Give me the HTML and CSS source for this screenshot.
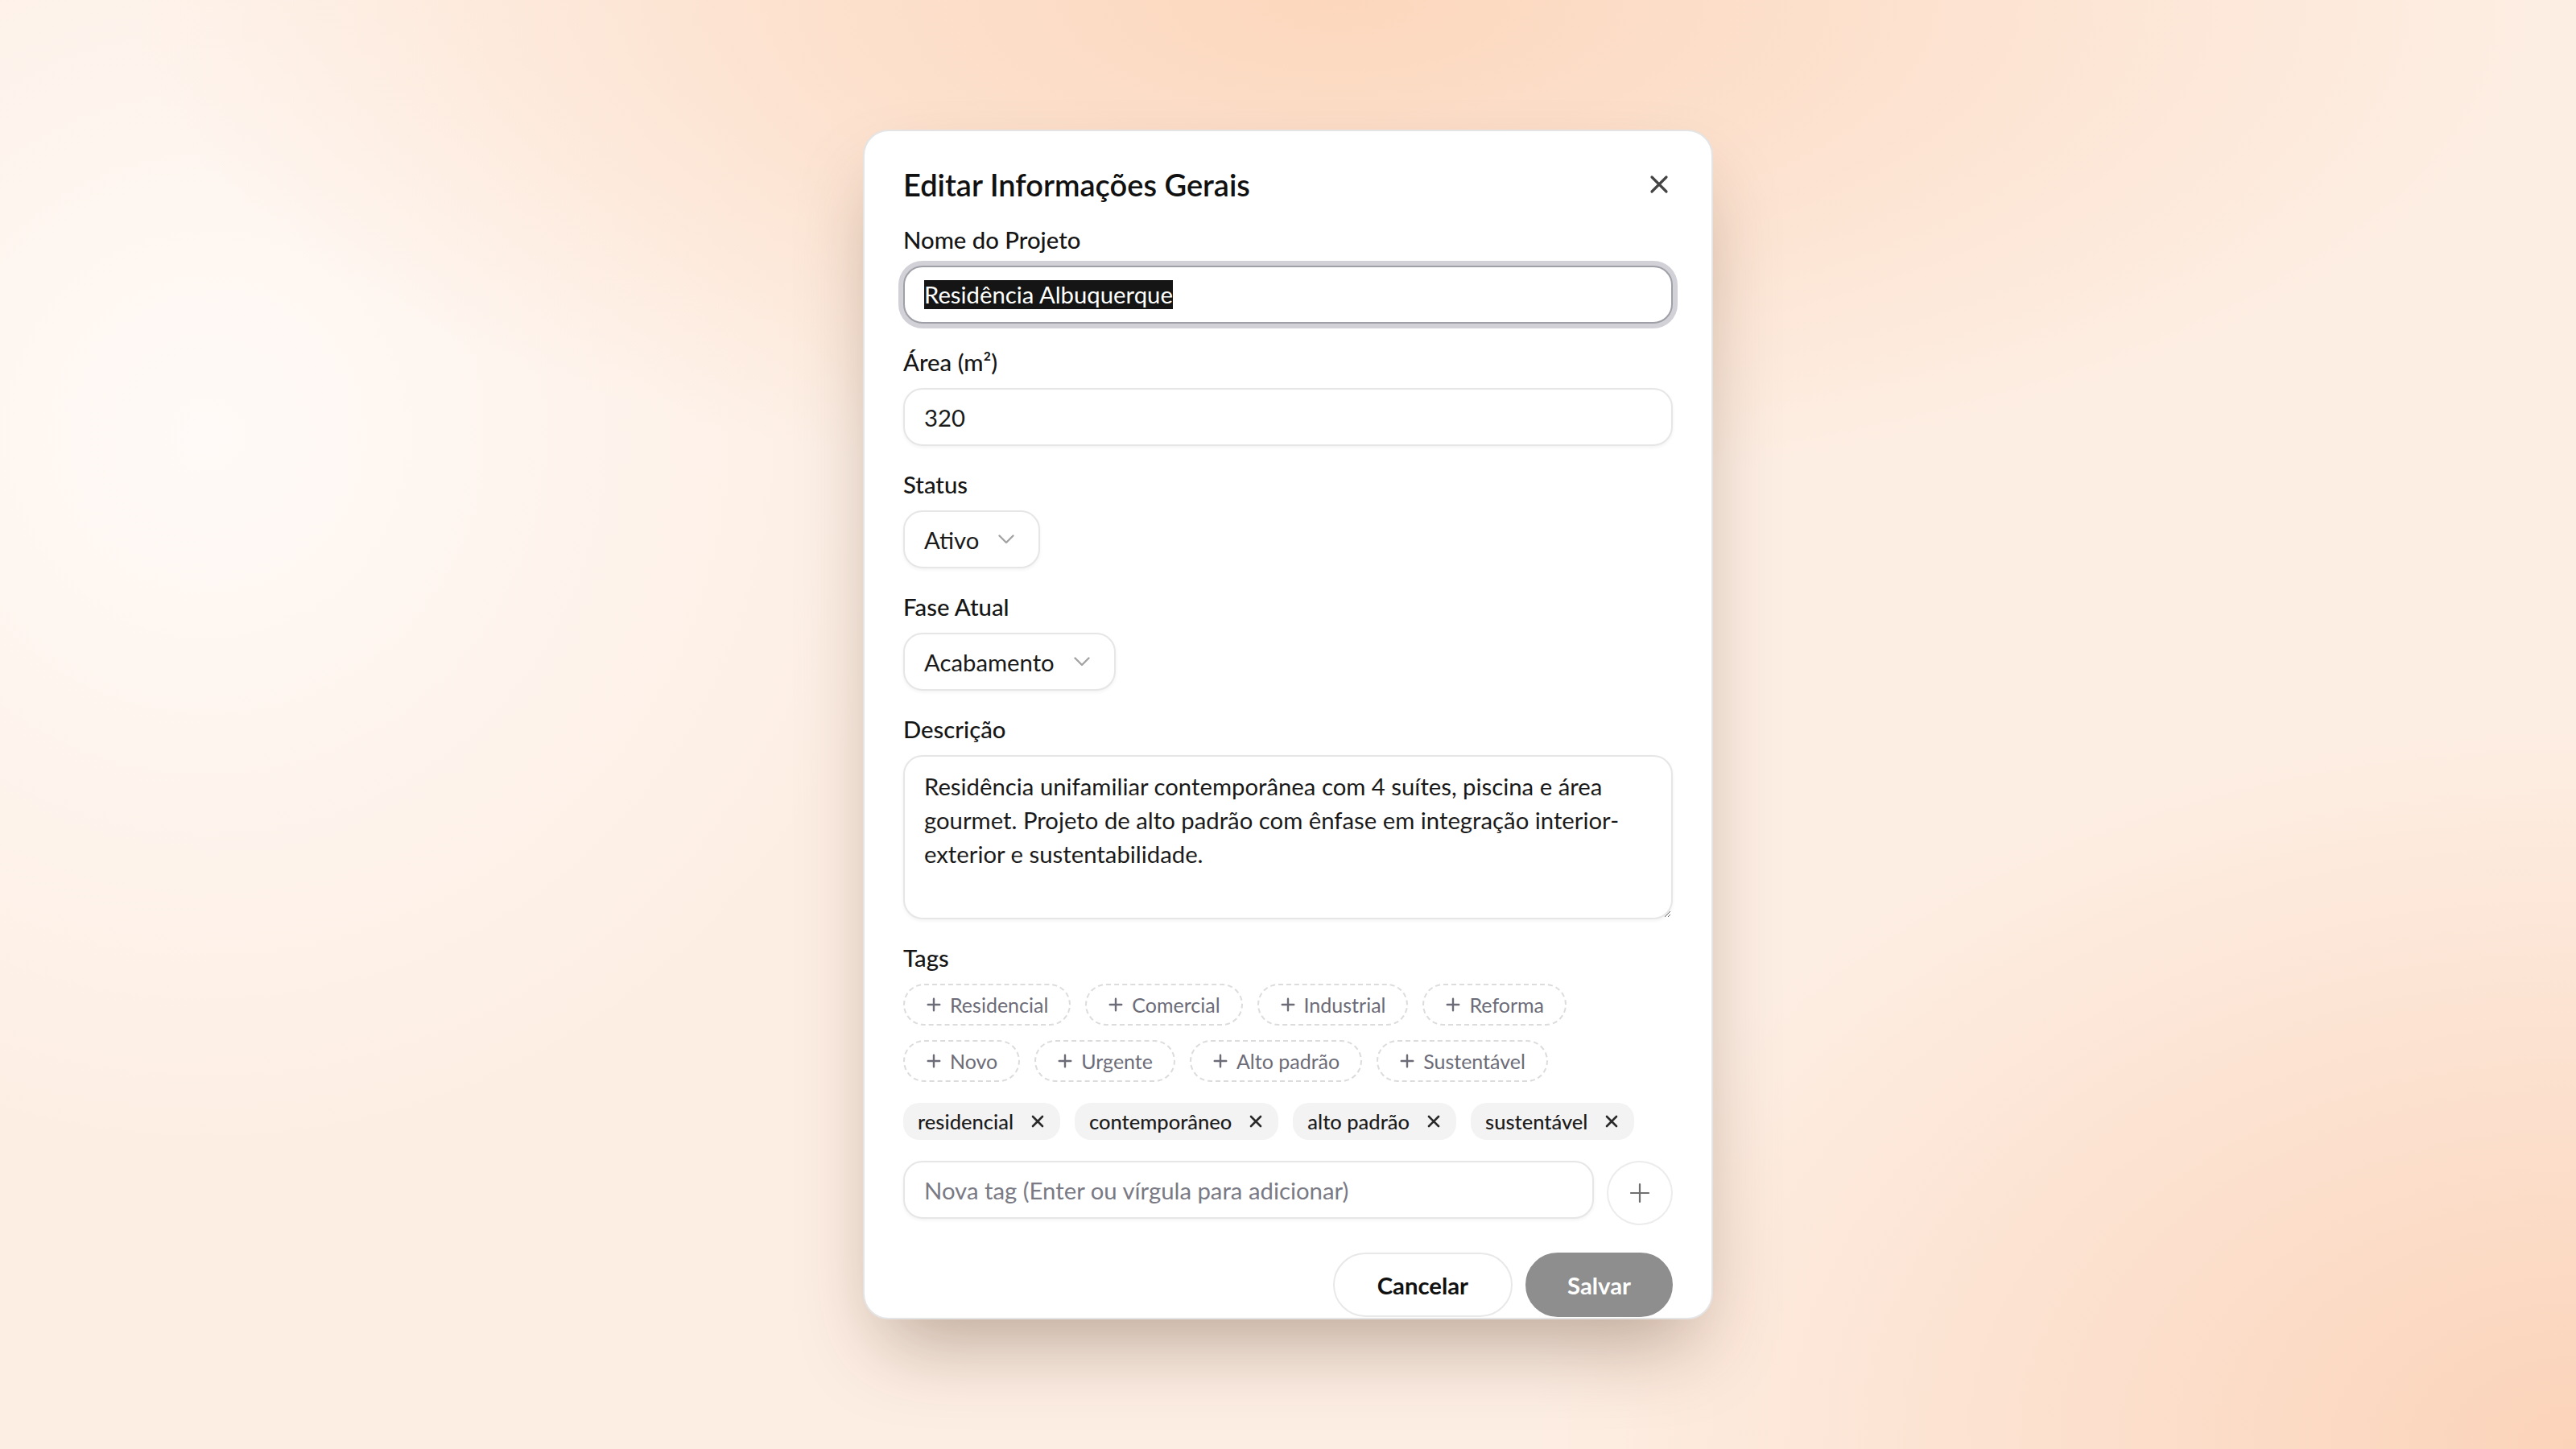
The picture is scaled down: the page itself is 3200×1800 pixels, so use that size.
FILE: index.html
```html
<!DOCTYPE html>
<html lang="pt-BR">
<head>
  <meta charset="UTF-8">
  <meta name="viewport" content="width=device-width, initial-scale=1.0">
  <title>Editar Informações Gerais</title>
  <link rel="stylesheet" href="styles.css">
</head>
<body>
  <div class="backdrop">
    <div class="modal">
      <div class="modal-header">
        <h2 class="modal-title">Editar Informações Gerais</h2>
        <button class="close-btn" aria-label="Fechar">
          <svg width="40" height="40" viewBox="0 0 40 40"><path d="M11 11 29 29M29 11 11 29"/></svg>
        </button>
      </div>

      <div class="form">
        <!-- Nome -->
        <div class="field">
          <label class="field-label">Nome do Projeto</label>
          <div class="text-input focused"><span class="selected-text">Residência Albuquerque</span></div>
        </div>

        <!-- Área -->
        <div class="field">
          <label class="field-label">Área (m²)</label>
          <input class="text-input" type="text" value="320">
        </div>

        <!-- Status -->
        <div class="field">
          <label class="field-label">Status</label>
          <button class="select">Ativo
            <svg width="20" height="12" viewBox="0 0 20 12"><path d="M1.5 1.5 10 10 18.5 1.5"/></svg>
          </button>
        </div>

        <!-- Fase -->
        <div class="field">
          <label class="field-label">Fase Atual</label>
          <button class="select">Acabamento
            <svg width="20" height="12" viewBox="0 0 20 12"><path d="M1.5 1.5 10 10 18.5 1.5"/></svg>
          </button>
        </div>

        <!-- Descrição -->
        <div class="field">
          <label class="field-label">Descrição</label>
          <textarea class="text-input textarea" rows="4">Residência unifamiliar contemporânea com 4 suítes, piscina e área gourmet. Projeto de alto padrão com ênfase em integração interior-exterior e sustentabilidade.</textarea>
        </div>

        <!-- Tags -->
        <div class="field">
          <label class="field-label">Tags</label>
          <div class="tag-suggestions">
            <button class="tag-suggest"><svg width="24" height="24" viewBox="0 0 24 24"><path d="M12 4.75v14.5M4.75 12h14.5"/></svg>Residencial</button>
            <button class="tag-suggest"><svg width="24" height="24" viewBox="0 0 24 24"><path d="M12 4.75v14.5M4.75 12h14.5"/></svg>Comercial</button>
            <button class="tag-suggest"><svg width="24" height="24" viewBox="0 0 24 24"><path d="M12 4.75v14.5M4.75 12h14.5"/></svg>Industrial</button>
            <button class="tag-suggest"><svg width="24" height="24" viewBox="0 0 24 24"><path d="M12 4.75v14.5M4.75 12h14.5"/></svg>Reforma</button>
            <button class="tag-suggest"><svg width="24" height="24" viewBox="0 0 24 24"><path d="M12 4.75v14.5M4.75 12h14.5"/></svg>Novo</button>
            <button class="tag-suggest"><svg width="24" height="24" viewBox="0 0 24 24"><path d="M12 4.75v14.5M4.75 12h14.5"/></svg>Urgente</button>
            <button class="tag-suggest"><svg width="24" height="24" viewBox="0 0 24 24"><path d="M12 4.75v14.5M4.75 12h14.5"/></svg>Alto padrão</button>
            <button class="tag-suggest"><svg width="24" height="24" viewBox="0 0 24 24"><path d="M12 4.75v14.5M4.75 12h14.5"/></svg>Sustentável</button>
          </div>

          <div class="tag-list">
            <span class="tag">residencial<button class="tag-remove"><svg width="20" height="20" viewBox="0 0 20 20"><path d="M4 4 16 16M16 4 4 16"/></svg></button></span>
            <span class="tag">contemporâneo<button class="tag-remove"><svg width="20" height="20" viewBox="0 0 20 20"><path d="M4 4 16 16M16 4 4 16"/></svg></button></span>
            <span class="tag">alto padrão<button class="tag-remove"><svg width="20" height="20" viewBox="0 0 20 20"><path d="M4 4 16 16M16 4 4 16"/></svg></button></span>
            <span class="tag">sustentável<button class="tag-remove"><svg width="20" height="20" viewBox="0 0 20 20"><path d="M4 4 16 16M16 4 4 16"/></svg></button></span>
          </div>

          <div class="tag-add">
            <input class="text-input" type="text" placeholder="Nova tag (Enter ou vírgula para adicionar)">
            <button class="add-btn" aria-label="Adicionar">
              <svg width="32" height="32" viewBox="0 0 32 32"><path d="M16 5v22M5 16h22"/></svg>
            </button>
          </div>
        </div>
      </div>

      <div class="modal-footer">
        <button class="btn btn-outline">Cancelar</button>
        <button class="btn btn-primary">Salvar</button>
      </div>
    </div>
  </div>
</body>
</html>
```

FILE: styles.css
```css
* {
  box-sizing: border-box;
}
body {
  margin: 0;
  font-family: "Lato", "Noto Sans", sans-serif;
  color: #1a1a1a;
  background:
    radial-gradient(ellipse 1500px 620px at 52% 0%, #fcd7bd 0%, rgba(252, 215, 189, 0) 100%),
    radial-gradient(ellipse 1300px 900px at 100% 100%, #fbd3b9 0%, rgba(251, 211, 185, 0) 100%),
    radial-gradient(ellipse 900px 900px at 8% 30%, #fffaf7 0%, rgba(255, 250, 247, 0) 100%),
    #fdeee3;
}
button {
  font-family: inherit;
  cursor: pointer;
}
.backdrop {
  min-height: 100vh;
  display: flex;
  align-items: center;
  justify-content: center;
}
.modal {
  width: 1056px;
  height: 1478px;
  overflow: hidden;
  background: #fff;
  border: 2px solid #e4e4e4;
  border-radius: 32px;
  padding: 38px 48px 48px;
  box-shadow: 0 50px 100px -24px rgba(60, 30, 10, 0.35);
}
.modal-header {
  display: flex;
  align-items: center;
  justify-content: space-between;
  height: 56px;
  margin-bottom: 21px;
}
.modal-title {
  margin: 0;
  font-size: 38px;
  line-height: 56px;
  font-weight: 600;
  color: #111;
}
.close-btn {
  width: 40px;
  height: 40px;
  padding: 0;
  margin-right: -3px;
  border: none;
  background: none;
}
.close-btn svg path {
  stroke: #444;
  stroke-width: 3.2;
  stroke-linecap: round;
  fill: none;
}

/* campos */
.form {
  display: flex;
  flex-direction: column;
  gap: 28px;
}
.field {
  display: flex;
  flex-direction: column;
  align-items: flex-start;
}
.field-label {
  font-size: 29.3px;
  line-height: 40px;
  font-weight: 500;
  margin-bottom: 12px;
  color: #161616;
}
.text-input {
  width: 100%;
  height: 72px;
  padding: 0 24px;
  border: 2px solid #e6e6e6;
  border-radius: 24px;
  background: #fff;
  font-family: inherit;
  font-size: 29.3px;
  color: #1a1a1a;
  outline: none;
  box-shadow: 0 2px 4px rgba(0, 0, 0, 0.05);
}
.text-input::placeholder {
  color: #7a7a85;
}
div.text-input {
  display: flex;
  align-items: center;
}
.text-input.focused {
  border-color: #9f9fa8;
  box-shadow: 0 0 0 6px #d1d1d7;
}
.selected-text {
  background: #151515;
  color: #fff;
  line-height: 36px;
}
.textarea {
  height: 204px;
  padding: 16px 24px;
  line-height: 42px;
  resize: vertical;
}

/* select */
.select {
  display: inline-flex;
  align-items: center;
  gap: 24px;
  height: 72px;
  padding: 0 30px 0 24px;
  border: 2px solid #e6e6e6;
  border-radius: 24px;
  background: #fff;
  font-size: 29.3px;
  color: #1a1a1a;
  box-shadow: 0 2px 4px rgba(0, 0, 0, 0.05);
}
.select svg path {
  stroke: #a3a3a3;
  stroke-width: 2.4;
  stroke-linecap: round;
  stroke-linejoin: round;
  fill: none;
}

/* tags */
.tag-suggestions {
  display: flex;
  flex-wrap: wrap;
  gap: 18px;
}
.tag-suggest {
  display: inline-flex;
  align-items: center;
  gap: 8px;
  height: 52px;
  padding: 0 26px 0 24px;
  border: 2px dashed #dcdcdc;
  border-radius: 999px;
  background: #fff;
  font-size: 25px;
  color: #6c6c78;
}
.tag-suggest svg path {
  stroke: #6c6c78;
  stroke-width: 2.4;
  stroke-linecap: round;
  fill: none;
}
.tag-list {
  display: flex;
  flex-wrap: wrap;
  gap: 18px;
  margin-top: 26px;
}
.tag {
  display: inline-flex;
  align-items: center;
  gap: 20px;
  height: 46px;
  padding: 0 18px 0 18px;
  border-radius: 20px;
  background: #f3f3f3;
  font-size: 25.5px;
  font-weight: 500;
  color: #1c1c1c;
}
.tag-remove {
  display: flex;
  padding: 0;
  border: none;
  background: none;
}
.tag-remove svg path {
  stroke: #2a2a2a;
  stroke-width: 2.6;
  stroke-linecap: round;
  fill: none;
}
.tag-add {
  display: flex;
  align-items: flex-start;
  gap: 16px;
  width: 100%;
  margin-top: 26px;
}
.tag-add .text-input {
  flex: 1;
}
.add-btn {
  flex: none;
  width: 82px;
  height: 80px;
  display: flex;
  align-items: center;
  justify-content: center;
  padding: 0;
  border: 2px solid #ececec;
  border-radius: 50%;
  background: #fff;
}
.add-btn svg path {
  stroke: #6f6f6f;
  stroke-width: 2.2;
  stroke-linecap: round;
  fill: none;
}

/* rodapé */
.modal-footer {
  display: flex;
  justify-content: flex-end;
  gap: 16px;
  margin-top: 34px;
}
.btn {
  height: 80px;
  padding: 0 50px;
  border-radius: 999px;
  font-size: 29.3px;
  font-weight: 700;
}
.btn-outline {
  padding: 0 53px;
  border: 2px solid #e8e8e8;
  background: #fff;
  color: #111;
}
.btn-primary {
  border: 2px solid #8e8e8e;
  background: #8e8e8e;
  color: #fff;
}
```
